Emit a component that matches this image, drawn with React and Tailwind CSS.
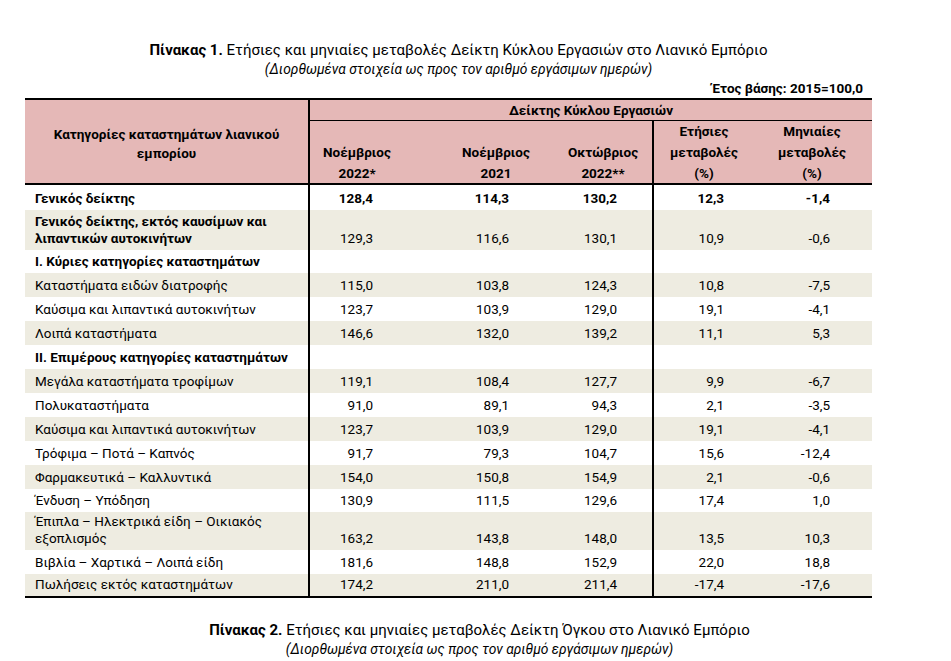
import React from 'react';

const rows = [
  { label: 'Γενικός δείκτης', v: ['128,4', '114,3', '130,2', '12,3', '-1,4'], bold: true, boldNums: true, h: 'h-[25px]' },
  { label: ['Γενικός δείκτης, εκτός καυσίμων και', 'λιπαντικών αυτοκινήτων'], v: ['129,3', '116,6', '130,1', '10,9', '-0,6'], bold: true, shade: true, h: 'h-[40px]' },
  { label: 'I. Κύριες κατηγορίες καταστημάτων', v: null, bold: true, h: 'h-[23px]' },
  { label: 'Καταστήματα ειδών διατροφής', v: ['115,0', '103,8', '124,3', '10,8', '-7,5'], shade: true, h: 'h-[24px]' },
  { label: 'Καύσιμα και λιπαντικά αυτοκινήτων', v: ['123,7', '103,9', '129,0', '19,1', '-4,1'], h: 'h-[24px]' },
  { label: 'Λοιπά καταστήματα', v: ['146,6', '132,0', '139,2', '11,1', '5,3'], shade: true, h: 'h-[24px]' },
  { label: 'II. Επιμέρους κατηγορίες καταστημάτων', v: null, bold: true, h: 'h-[24px]' },
  { label: 'Μεγάλα καταστήματα τροφίμων', v: ['119,1', '108,4', '127,7', '9,9', '-6,7'], shade: true, h: 'h-[24px]' },
  { label: 'Πολυκαταστήματα', v: ['91,0', '89,1', '94,3', '2,1', '-3,5'], h: 'h-[24px]' },
  { label: 'Καύσιμα και λιπαντικά αυτοκινήτων', v: ['123,7', '103,9', '129,0', '19,1', '-4,1'], shade: true, h: 'h-[24px]' },
  { label: 'Τρόφιμα – Ποτά – Καπνός', v: ['91,7', '79,3', '104,7', '15,6', '-12,4'], h: 'h-[24px]' },
  { label: 'Φαρμακευτικά – Καλλυντικά', v: ['154,0', '150,8', '154,9', '2,1', '-0,6'], shade: true, h: 'h-[24px]' },
  { label: 'Ένδυση – Υπόδηση', v: ['130,9', '111,5', '129,6', '17,4', '1,0'], h: 'h-[23px]' },
  { label: ['Έπιπλα – Ηλεκτρικά είδη – Οικιακός', 'εξοπλισμός'], v: ['163,2', '143,8', '148,0', '13,5', '10,3'], shade: true, h: 'h-[38px]' },
  { label: 'Βιβλία – Χαρτικά – Λοιπά είδη', v: ['181,6', '148,8', '152,9', '22,0', '18,8'], h: 'h-[24px]' },
  { label: 'Πωλήσεις εκτός καταστημάτων', v: ['174,2', '211,0', '211,4', '-17,4', '-17,6'], shade: true, h: 'h-[22px]' },
];

// widths and right paddings of the five number columns
const numCols = [
  'w-[120px] pr-[57px]',
  'w-[120px] pr-[41px]',
  'w-[104px] pr-[35px] border-r-2 border-black',
  'w-[108px] pr-[38px]',
  'w-[110px] pr-[42px]',
];

function DataRow({ row }) {
  const lines = Array.isArray(row.label) ? row.label : [row.label];
  return (
    <div className={`flex ${row.h} ${row.shade ? 'bg-[#eeece1]' : 'bg-white'}`}>
      <div className={`flex w-[285px] flex-col justify-end border-r-2 border-black pb-[3px] pl-[10px] ${row.bold ? 'font-bold' : ''}`}>
        {lines.map((l) => (
          <span key={l} className="whitespace-nowrap">{l}</span>
        ))}
      </div>
      {numCols.map((cls, i) => (
        <div key={i} className={`flex items-end justify-end pb-[3px] ${cls} ${row.boldNums ? 'font-bold' : ''}`}>
          {row.v ? row.v[i] : ''}
        </div>
      ))}
    </div>
  );
}

function Header() {
  return (
    <div className="flex h-[87px] border-y-2 border-black bg-[#e5b8b7] font-bold">
      <div className="flex w-[285px] items-center justify-center border-r-2 border-black pt-[4px] text-center leading-[19px]">
        <div>
          Κατηγορίες καταστημάτων λιανικού
          <br />
          εμπορίου
        </div>
      </div>
      <div className="flex flex-1 flex-col">
        <div className="flex h-[25px] items-center justify-center border-b border-black">
          Δείκτης Κύκλου Εργασιών
        </div>
        <div className="flex flex-1 leading-[21px]">
          <div className="w-[120px] pr-[26px] pt-[21px] text-center">Νοέμβριος<br />2022*</div>
          <div className="w-[120px] pl-[12px] pt-[21px] text-center">Νοέμβριος<br />2021</div>
          <div className="w-[104px] border-r-2 border-black pl-[4px] pt-[21px] text-center">Οκτώβριος<br />2022**</div>
          <div className="w-[108px] pr-[8px] text-center">Ετήσιες<br />μεταβολές<br />(%)</div>
          <div className="w-[110px] pr-[10px] text-center">Μηνιαίες<br />μεταβολές<br />(%)</div>
        </div>
      </div>
    </div>
  );
}

export default function App() {
  return (
    <div className="min-h-[661px] w-[951px] bg-white font-['Roboto',sans-serif] text-[13.5px] text-black">
      <div className="ml-[25px] w-[847px] pt-[40px]">
        <div className="pl-[20px] text-center text-[15px] leading-[20px]">
          <span className="font-bold">Πίνακας 1.</span> Ετήσιες και μηνιαίες μεταβολές Δείκτη Κύκλου Εργασιών στο Λιανικό Εμπόριο
        </div>
        <div className="pl-[20px] text-center text-[13.8px] italic leading-[18px]">
          (Διορθωμένα στοιχεία ως προς τον αριθμό εργάσιμων ημερών)
        </div>
        <div className="h-[20px] pr-[9px] pt-[2px] text-right font-bold leading-[17px]">Έτος βάσης: 2015=100,0</div>

        <Header />
        <div className="border-b-2 border-black leading-[17px]">
          {rows.map((r, i) => (
            <DataRow key={i} row={r} />
          ))}
        </div>

        <div className="mt-[22px] pl-[62px] text-center text-[15px] leading-[20px]">
          <span className="font-bold">Πίνακας 2.</span> Ετήσιες και μηνιαίες μεταβολές Δείκτη Όγκου στο Λιανικό Εμπόριο
        </div>
        <div className="pl-[62px] text-center text-[13.8px] italic leading-[18px]">
          (Διορθωμένα στοιχεία ως προς τον αριθμό εργάσιμων ημερών)
        </div>
      </div>
    </div>
  );
}
